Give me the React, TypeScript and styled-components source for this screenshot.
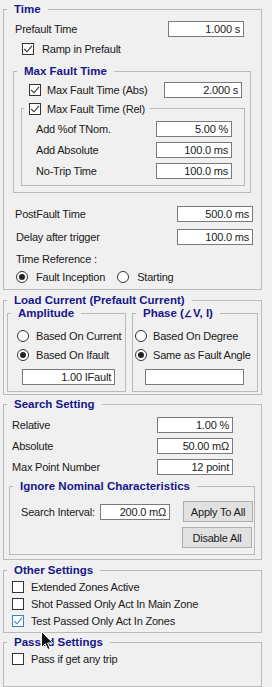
import React from "react";
import styled, { createGlobalStyle } from "styled-components";

const Global = createGlobalStyle`
  html, body { margin: 0; padding: 0; background: #f0f0f0; }
  * { box-sizing: border-box; }
`;

const Panel = styled.div`
  position: relative;
  width: 272px;
  height: 687px;
  padding: 0 10px 0 3px;
  background: #f0f0f0;
  display: flex;
  flex-direction: column;
  font-family: "Liberation Sans", Arial, sans-serif;
  font-size: 11px;
  letter-spacing: -0.2px;
  color: #1a1a1a;
  overflow: hidden;
`;

type Sp = { $mt?: number; $ml?: number; $mr?: number; $pb?: number; $w?: number };

const Group = styled.fieldset<Sp>`
  margin: ${(p) => p.$mt ?? 0}px ${(p) => p.$mr ?? 0}px 0 ${(p) => p.$ml ?? 0}px;
  padding: 0 0 ${(p) => p.$pb ?? 0}px 0;
  border: 1px solid #bababa;
  min-width: 0;
  display: flex;
  flex-direction: column;
  ${(p) => (p.$w ? `width: ${p.$w}px; flex: none;` : "flex: 1;")}
`;

const Legend = styled.legend`
  margin-left: 3px;
  padding: 0 7px;
  height: 15px;
  line-height: 15px;
  font-weight: bold;
  font-size: 11.5px;
  letter-spacing: 0;
  color: #16168a;
  white-space: nowrap;
`;

const Angle = styled.span`
  font-size: 9px;
  margin-right: 1px;
`;

const CheckLegend = styled.legend`
  margin-left: 2px;
  padding: 0 5px;
  height: 15px;
  display: flex;
  align-items: center;
  gap: 6px;
  white-space: nowrap;
`;

const Row = styled.div<Sp & { $h?: number }>`
  display: flex;
  align-items: center;
  height: ${(p) => p.$h ?? 16}px;
  margin: ${(p) => p.$mt ?? 0}px ${(p) => p.$mr ?? 0}px 0 ${(p) => p.$ml ?? 0}px;
  white-space: nowrap;
`;

const EndRow = styled(Row)`
  justify-content: flex-end;
`;

const Label = styled.span<{ $w?: number }>`
  ${(p) => (p.$w ? `width: ${p.$w}px; flex: none;` : "flex: 1;")}
  white-space: nowrap;
`;

const ValueBox = styled.div<{ $w: number }>`
  width: ${(p) => p.$w}px;
  height: 16px;
  flex: none;
  background: #fff;
  border: 1px solid #7a7a7a;
  text-align: right;
  padding-right: 3px;
  line-height: 14px;
  white-space: nowrap;
`;

const Button = styled.div<{ $ml?: number }>`
  width: 70px;
  height: 21px;
  flex: none;
  margin-left: ${(p) => p.$ml ?? 0}px;
  background: #e1e1e1;
  border: 1px solid #adadad;
  display: flex;
  align-items: center;
  justify-content: center;
`;

const Box = styled.span<{ $hover?: boolean }>`
  width: 12px;
  height: 12px;
  flex: none;
  background: #fff;
  border: 1px solid ${(p) => (p.$hover ? "#3f7fc4" : "#333")};
  display: inline-flex;
  align-items: center;
  justify-content: center;
`;

const CheckItem = styled.span<{ $gap?: number }>`
  display: inline-flex;
  align-items: center;
  gap: ${(p) => p.$gap ?? 6}px;
`;

const Circle = styled.span`
  width: 12px;
  height: 12px;
  flex: none;
  border-radius: 50%;
  background: #fff;
  border: 1px solid #333;
  display: inline-flex;
  align-items: center;
  justify-content: center;
`;

const Dot = styled.span`
  width: 6px;
  height: 6px;
  border-radius: 50%;
  background: #222;
`;

const RadioItem = styled.span<{ $gap?: number; $mr?: number }>`
  display: inline-flex;
  align-items: center;
  gap: ${(p) => p.$gap ?? 8}px;
  margin-right: ${(p) => p.$mr ?? 0}px;
`;

const SubRow = styled.div`
  display: flex;
  gap: 6px;
  margin: -2px 3px 0 3px;
`;

const Cursor = styled.svg`
  position: absolute;
  left: 41px;
  top: 631px;
  pointer-events: none;
`;

function Check({ checked, hover }: { checked?: boolean; hover?: boolean }) {
  return (
    <Box $hover={hover}>
      {checked && (
        <svg width="10" height="10" viewBox="0 0 10 10">
          <polyline
            points="1.2,5 4,7.8 9,1.8"
            fill="none"
            stroke={hover ? "#4a84c4" : "#333"}
            strokeWidth="1.1"
          />
        </svg>
      )}
    </Box>
  );
}

function Radio({ checked, label, gap, mr }: { checked?: boolean; label: string; gap?: number; mr?: number }) {
  return (
    <RadioItem $gap={gap} $mr={mr}>
      <Circle>{checked && <Dot />}</Circle>
      {label}
    </RadioItem>
  );
}

export default function App() {
  return (
    <Panel>
      <Global />
      <Group $mt={2} $pb={4}>
        <Legend>Time</Legend>
        <Row $mt={4} $ml={11} $mr={17}>
          <Label>Prefault Time</Label>
          <ValueBox $w={76}>1.000 s</ValueBox>
        </Row>
        <Row $mt={4} $ml={18}>
          <CheckItem $gap={8}>
            <Check checked />
            Ramp in Prefault
          </CheckItem>
        </Row>
        <Group $mt={7} $ml={9} $mr={10} $pb={6}>
          <Legend>Max Fault Time</Legend>
          <Row $mt={3} $ml={15} $mr={8}>
            <Label>
              <CheckItem>
                <Check checked />
                Max Fault Time (Abs)
              </CheckItem>
            </Label>
            <ValueBox $w={78}>2.000 s</ValueBox>
          </Row>
          <Group $mt={3} $ml={7} $mr={5} $pb={6}>
            <CheckLegend>
              <Check checked />
              Max Fault Time (Rel)
            </CheckLegend>
            <Row $mt={5} $ml={14} $mr={12}>
              <Label>Add %of TNom.</Label>
              <ValueBox $w={76}>5.00 %</ValueBox>
            </Row>
            <Row $mt={5} $ml={14} $mr={12}>
              <Label>Add Absolute</Label>
              <ValueBox $w={76}>100.0 ms</ValueBox>
            </Row>
            <Row $mt={5} $ml={14} $mr={12}>
              <Label>No-Trip Time</Label>
              <ValueBox $w={76}>100.0 ms</ValueBox>
            </Row>
          </Group>
        </Group>
        <Row $mt={13} $ml={11} $mr={8}>
          <Label>PostFault Time</Label>
          <ValueBox $w={76}>500.0 ms</ValueBox>
        </Row>
        <Row $mt={7} $ml={12} $mr={8}>
          <Label>Delay after trigger</Label>
          <ValueBox $w={76}>100.0 ms</ValueBox>
        </Row>
        <Row $mt={6} $ml={12}>
          <Label>Time Reference :</Label>
        </Row>
        <Row $mt={2} $ml={12}>
          <Radio checked label="Fault Inception" mr={12} />
          <Radio label="Starting" />
        </Row>
      </Group>

      <Group $mt={3} $pb={2}>
        <Legend>Load Current (Prefault Current)</Legend>
        <SubRow>
          <Group $w={119} $pb={6}>
            <Legend>Amplitude</Legend>
            <Row $mt={7} $ml={9}>
              <Radio label="Based On Current" gap={7} />
            </Row>
            <Row $mt={3} $ml={9}>
              <Radio checked label="Based On Ifault" gap={7} />
            </Row>
            <Row $mt={6} $ml={14}>
              <ValueBox $w={93}>1.00 IFault</ValueBox>
            </Row>
          </Group>
          <Group $pb={6}>
            <Legend>
              Phase (<Angle>∠</Angle>V, I)
            </Legend>
            <Row $mt={7} $ml={2}>
              <Radio label="Based On Degree" gap={6} />
            </Row>
            <Row $mt={3} $ml={2}>
              <Radio checked label="Same as Fault Angle" gap={6} />
            </Row>
            <Row $mt={6} $ml={12}>
              <ValueBox $w={99}></ValueBox>
            </Row>
          </Group>
        </SubRow>
      </Group>

      <Group $mt={2} $pb={4}>
        <Legend>Search Setting</Legend>
        <Row $mt={5} $ml={8} $mr={28}>
          <Label>Relative</Label>
          <ValueBox $w={76}>1.00 %</ValueBox>
        </Row>
        <Row $mt={5} $ml={8} $mr={28}>
          <Label>Absolute</Label>
          <ValueBox $w={76}>50.00 mΩ</ValueBox>
        </Row>
        <Row $mt={5} $ml={8} $mr={28}>
          <Label>Max Point Number</Label>
          <ValueBox $w={76}>12 point</ValueBox>
        </Row>
        <Group $mt={4} $ml={5} $mr={6} $pb={6}>
          <Legend>Ignore Nominal Characteristics</Legend>
          <Row $mt={7} $ml={11} $h={21}>
            <Label $w={79}>Search Interval:</Label>
            <ValueBox $w={70}>200.0 mΩ</ValueBox>
            <Button $ml={13}>Apply To All</Button>
          </Row>
          <EndRow $mt={5} $mr={2} $h={21}>
            <Button>Disable All</Button>
          </EndRow>
        </Group>
      </Group>

      <Group $mt={3} $pb={3}>
        <Legend>Other Settings</Legend>
        <Row $ml={8} $h={17}>
          <CheckItem $gap={7}>
            <Check />
            Extended Zones Active
          </CheckItem>
        </Row>
        <Row $ml={8} $h={17}>
          <CheckItem $gap={7}>
            <Check />
            Shot Passed Only Act In Main Zone
          </CheckItem>
        </Row>
        <Row $ml={8} $h={17}>
          <CheckItem $gap={7}>
            <Check checked hover />
            Test Passed Only Act In Zones
          </CheckItem>
        </Row>
      </Group>

      <Group $mt={2} $pb={8}>
        <Legend>Passed Settings</Legend>
        <Row $ml={8} $h={17}>
          <CheckItem $gap={7}>
            <Check />
            Pass if get any trip
          </CheckItem>
        </Row>
      </Group>

      <Cursor width="13" height="20" viewBox="0 0 13 20">
        <path
          d="M0.5,0.5 L0.5,16.5 L4.3,12.8 L6.8,18.6 L9,17.6 L6.6,12 L11.8,12 Z"
          fill="#111"
          stroke="#fff"
          strokeWidth="1"
          strokeLinejoin="round"
        />
      </Cursor>
    </Panel>
  );
}
